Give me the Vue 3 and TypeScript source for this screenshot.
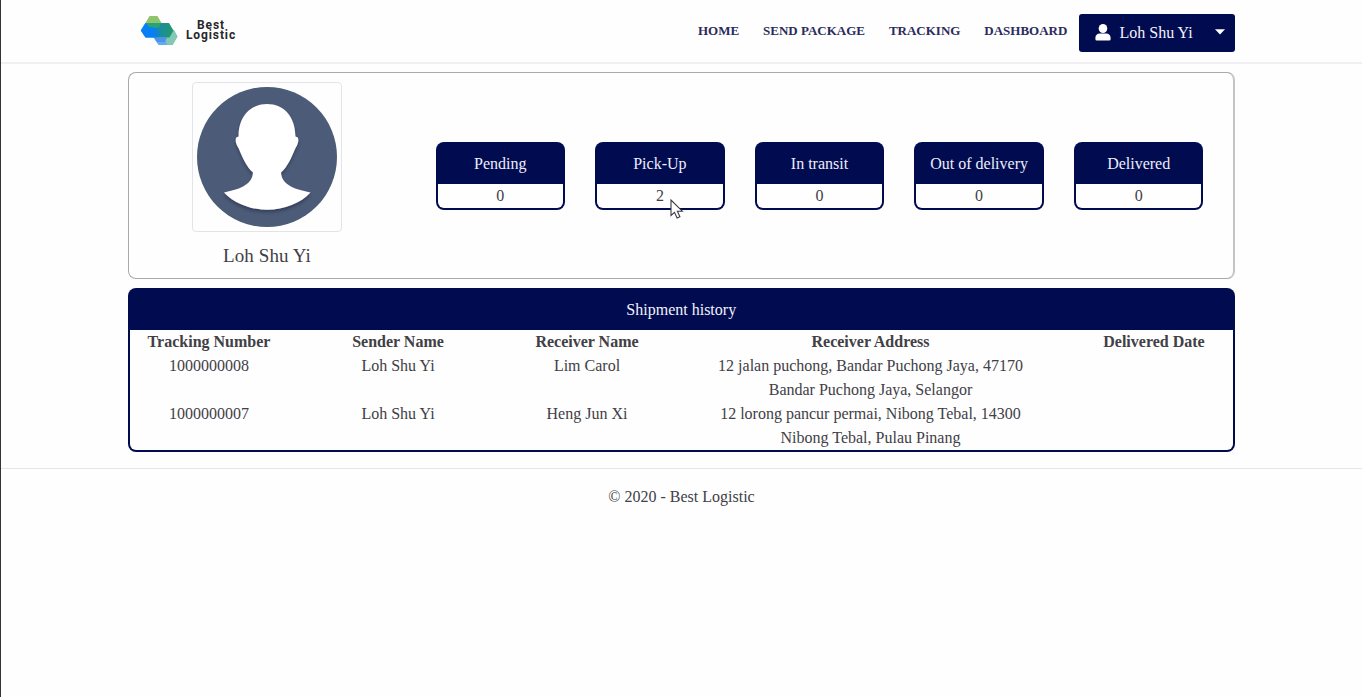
<script setup lang="ts">
interface Shipment {
  tracking: string
  sender: string
  receiver: string
  address: string
  delivered: string
}

const links: string[] = ['HOME', 'SEND PACKAGE', 'TRACKING', 'DASHBOARD']
const userName = 'Loh Shu Yi'

const statuses: { label: string; count: number }[] = [
  { label: 'Pending', count: 0 },
  { label: 'Pick-Up', count: 2 },
  { label: 'In transit', count: 0 },
  { label: 'Out of delivery', count: 0 },
  { label: 'Delivered', count: 0 },
]

const headings: string[] = ['Tracking Number', 'Sender Name', 'Receiver Name', 'Receiver Address', 'Delivered Date']

const shipments: Shipment[] = [
  {
    tracking: '1000000008',
    sender: 'Loh Shu Yi',
    receiver: 'Lim Carol',
    address: '12 jalan puchong, Bandar Puchong Jaya, 47170 Bandar Puchong Jaya, Selangor',
    delivered: '',
  },
  {
    tracking: '1000000007',
    sender: 'Loh Shu Yi',
    receiver: 'Heng Jun Xi',
    address: '12 lorong pancur permai, Nibong Tebal, 14300 Nibong Tebal, Pulau Pinang',
    delivered: '',
  },
]
</script>

<template>
  <div class="page">
    <header class="topbar">
      <div class="container bar">
        <a class="brand">
          <svg class="mark" width="38" height="31" viewBox="0 0 38 31">
            <defs>
              <linearGradient id="teal" x1="0" y1="0" x2="1" y2="0">
                <stop offset="0" stop-color="#0a84f0" />
                <stop offset="0.45" stop-color="#1687b4" />
                <stop offset="1" stop-color="#239a66" />
              </linearGradient>
              <linearGradient id="blue" x1="0" y1="0" x2="1" y2="0">
                <stop offset="0" stop-color="#087ff5" />
                <stop offset="0.6" stop-color="#087ff5" />
                <stop offset="1" stop-color="#1286c4" />
              </linearGradient>
            </defs>
            <polygon points="17.5,15 33.5,15 37.5,21.5 32.5,30 18.5,30 13.5,22.5" fill="#67a8f3" />
            <polygon points="31,15 34,15 37.5,21.5 32.5,30 27,30 24.5,22.5" fill="#83c8b2" />
            <polygon points="9.5,1 17.5,1 21.5,8 17.5,15 9.5,15 5.5,8" fill="#8fc36c" />
            <polygon points="5.5,8 29,8 33.5,15.5 29.5,22.5 5.5,22.5 0.8,15.5" fill="url(#teal)" />
            <polygon points="5.5,8 14,8 20,19 17.5,22.5 5.5,22.5 0.8,15.5" fill="url(#blue)" />
            <polygon points="6,8 21.5,8 18.5,13 9,12" fill="#28a377" />
            <polygon points="13.8,22.5 27,22.5 25,27 17,27" fill="#4b93eb" />
          </svg>
          <span class="wordmark"><span>Best</span><span>Logistic</span></span>
        </a>
        <nav class="links">
          <a v-for="link in links" :key="link">{{ link }}</a>
        </nav>
        <button class="user" type="button">
          <svg class="person" width="16" height="17" viewBox="0 0 16 17" fill="#fff">
            <ellipse cx="8" cy="4.5" rx="4.3" ry="4.5" />
            <path d="M4.600 9.600h6.800a4.200 4.200 0 0 1 4.200 4.200v1.400a1.400 1.400 0 0 1-1.400 1.400H1.800a1.400 1.400 0 0 1-1.400-1.400v-1.400a4.200 4.200 0 0 1 4.200-4.200z" />
          </svg>
          <span class="user-name">{{ userName }}</span>
          <svg class="caret" width="10" height="6" viewBox="0 0 10 6"><path d="M0 .3h10L5 5.6z" fill="#fff" /></svg>
        </button>
      </div>
    </header>

    <main class="container">
      <section class="summary">
        <div class="profile">
          <div class="thumb">
            <svg width="140" height="140" viewBox="0 0 140 140">
              <defs>
                <filter id="shade" x="-20%" y="-20%" width="140%" height="140%">
                  <feDropShadow dx="0" dy="2.5" stdDeviation="1.8" flood-color="#263553" flood-opacity="0.7" />
                </filter>
              </defs>
              <circle cx="70" cy="70" r="70" fill="#4c5b77" />
              <path
                filter="url(#shade)"
                fill="#fff"
                d="M70 17C53 17 41.500 30 41.600 49.500L39.200 50.500C37.800 54 39.500 58 41.500 61C45.500 70.500 49.500 80 56 85.500C55.500 97 44 102 27 105.500C37 116 53 122.800 70 122.800S104 116 113.500 105.500C96 102 84.500 97 84 85.500C90.500 80 94.500 70.500 98.500 61C100.500 58 102.200 54 100.800 50.500L98.400 49.500C98.500 30 87 17 70 17z"
              />
            </svg>
          </div>
          <div class="profile-name">{{ userName }}</div>
        </div>
        <div class="stats">
          <div v-for="s in statuses" :key="s.label" class="stat">
            <div class="stat-label">{{ s.label }}</div>
            <div class="stat-count">{{ s.count }}</div>
          </div>
        </div>
      </section>

      <section class="history">
        <div class="history-title">Shipment history</div>
        <div class="history-body">
          <div class="row head">
            <div v-for="h in headings" :key="h">{{ h }}</div>
          </div>
          <div v-for="s in shipments" :key="s.tracking" class="row">
            <div>{{ s.tracking }}</div>
            <div>{{ s.sender }}</div>
            <div>{{ s.receiver }}</div>
            <div>{{ s.address }}</div>
            <div>{{ s.delivered }}</div>
          </div>
        </div>
      </section>
    </main>

    <footer class="footer">© 2020 - Best Logistic</footer>

    <svg class="pointer" width="14" height="21" viewBox="0 0 14 21">
      <path d="M1 1v15.500l3.500-3.200 2.600 5.700 2.800-1.200-2.500-5.600h4.900z" fill="#fff" stroke="#3b3945" stroke-width="1.100" />
    </svg>
  </div>
</template>

<style>
body {
  margin: 0;
  overflow: hidden;
  background: #fefefe;
}
</style>

<style scoped>
.page {
  box-sizing: border-box;
  position: relative;
  height: 697px;
  border-left: 1px solid #333236;
  font: 16px/24px "Liberation Serif", "Times New Roman", serif;
  color: #414046;
}
.container {
  box-sizing: border-box;
  width: 1108px;
  margin-left: 126px;
}
main.container {
  width: 1107.500px;
  margin-left: 126.500px;
}
.topbar {
  box-sizing: border-box;
  height: 64px;
  border-bottom: 2px solid #f0f0f2;
}
.bar {
  display: flex;
  align-items: flex-start;
}
.brand {
  display: flex;
  margin-left: 13px;
  padding-top: 15px;
}
.wordmark {
  display: flex;
  flex-direction: column;
  align-items: center;
  width: 54px;
  margin-left: 6px;
  padding-top: 5px;
  font: 700 12px/10px Roboto, sans-serif;
  letter-spacing: 0.9px;
  color: #27272b;
}
.links {
  display: flex;
  gap: 23.900px;
  margin-left: auto;
  padding-top: 19px;
  font-size: 13px;
  font-weight: 700;
  color: #2b2b5c;
}
.user {
  display: flex;
  align-items: center;
  box-sizing: border-box;
  width: 156px;
  height: 38px;
  margin: 14px 0 0 11.600px;
  padding: 0 10.500px 0 15.500px;
  border: 0;
  border-radius: 3px;
  background: #000b50;
  color: #f2f2fa;
  font: inherit;
}
.person {
  margin-bottom: 2px;
}
.user-name {
  margin-left: 9px;
}
.caret {
  margin-bottom: 2px;
  margin-left: auto;
}
.summary {
  display: flex;
  box-sizing: border-box;
  height: 207px;
  margin-top: 8px;
  border: 1px solid #a9a9ac;
  border-right: 2px solid #c4c4c6;
  border-radius: 8px;
}
.profile {
  width: 277px;
  padding-top: 9px;
  text-align: center;
}
.thumb {
  display: flex;
  box-sizing: border-box;
  width: 150px;
  height: 150px;
  margin: 0 auto;
  padding: 4px;
  border: 1px solid #e2e4ea;
  border-radius: 4px;
}
.profile-name {
  margin-top: 12px;
  font-size: 19px;
  letter-spacing: 0.1px;
}
.stats {
  display: flex;
  gap: 30px;
  margin-left: 30px;
  padding-top: 69px;
}
.stat {
  box-sizing: border-box;
  width: 129.600px;
  height: 68px;
  padding: 2px;
  border-radius: 8px;
  background: #000b50;
  text-align: center;
}
.stat-label {
  height: 40px;
  line-height: 40px;
  color: #eeeefa;
}
.stat-count {
  border-radius: 0 0 6px 6px;
  background: #fefefe;
}
.history {
  box-sizing: border-box;
  height: 164px;
  margin-top: 9px;
  padding: 2px;
  border-radius: 8px;
  background: #000b50;
  text-align: center;
}
.history-title {
  height: 40px;
  line-height: 40px;
  color: #f2f2fa;
}
.history-body {
  overflow: hidden;
  border-radius: 0 0 6px 6px;
  background: #fefefe;
}
.row {
  display: grid;
  grid-template-columns: 189px 189px 189px 378px 189px;
  margin: 0 -15px;
}
.row > div {
  padding: 0 16px;
}
.head {
  font-weight: 700;
}
.footer {
  margin-top: 16px;
  padding-top: 16px;
  border-top: 1px solid #e6e6ea;
  text-align: center;
}
.pointer {
  position: absolute;
  left: 669px;
  top: 199px;
}
</style>
